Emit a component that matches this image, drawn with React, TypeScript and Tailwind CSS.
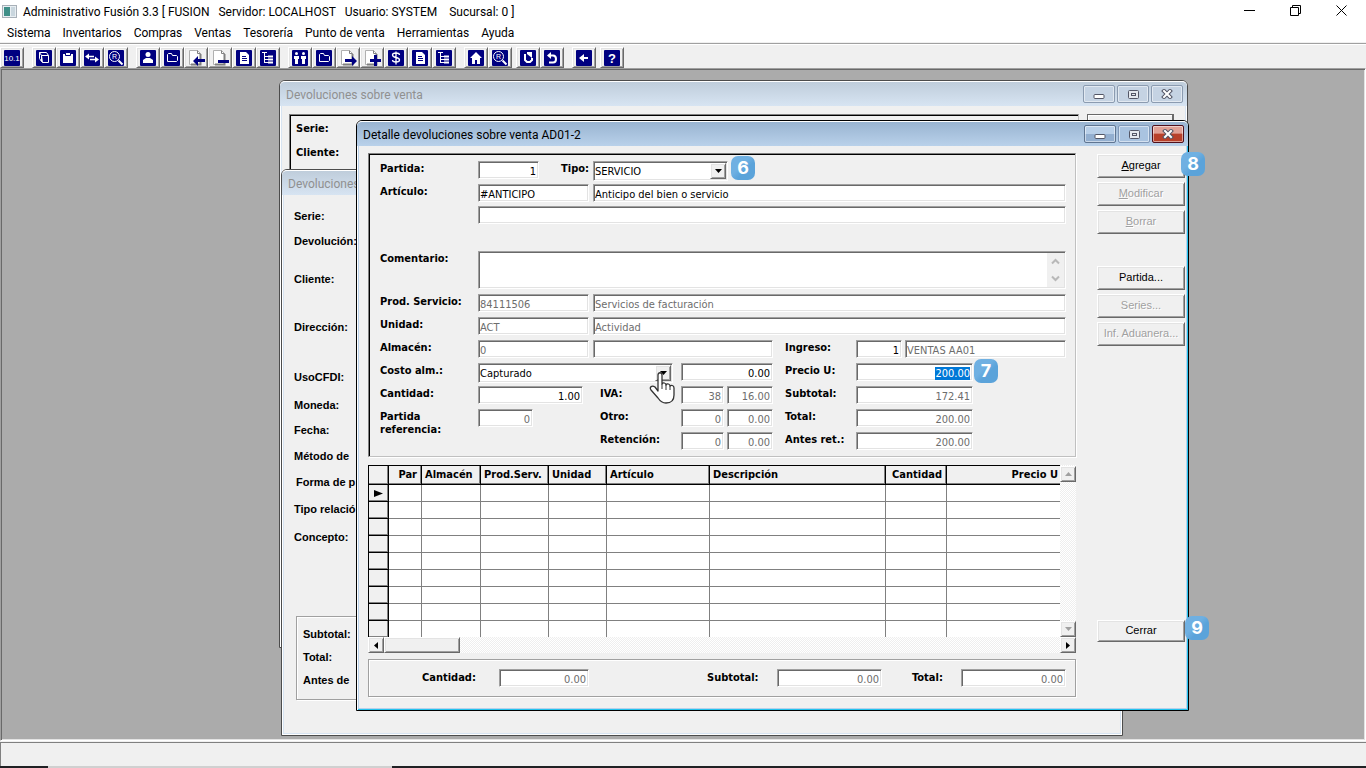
import { useEffect, useRef } from 'react'
import type { ReactNode } from 'react'

const MENUS = ['Sistema', 'Inventarios', 'Compras', 'Ventas', 'Tesorería', 'Punto de venta', 'Herramientas', 'Ayuda']

const COLUMNS = [
  { title: 'Par', width: 33, right: true },
  { title: 'Almacén', width: 59 },
  { title: 'Prod.Serv.', width: 68 },
  { title: 'Unidad', width: 58 },
  { title: 'Artículo', width: 103 },
  { title: 'Descripción', width: 176 },
  { title: 'Cantidad', width: 61, right: true },
  { title: 'Precio U', width: 113, right: true },
]

const SUNKEN = 'border border-t-[#a0a0a0] border-l-[#a0a0a0] border-r-white border-b-white shadow-[inset_1px_1px_0_#696969,inset_-1px_-1px_0_#e3e3e3]'
const RAISED = 'border border-t-white border-l-white border-r-[#696969] border-b-[#696969] bg-[#f0f0f0] shadow-[inset_1px_1px_0_#e3e3e3,inset_-1px_-1px_0_#a0a0a0]'

/* ---------- Toolbar icons ---------- */

// Navy tile with a white glyph inside
function Tile({ children }: { children: ReactNode }) {
  return (
    <svg width="18" height="18" viewBox="0 0 18 18" fill="none" stroke="white" aria-hidden="true">
      <rect x="1" y="1" width="16" height="16" rx="1" fill="#000080" stroke="none" />
      {children}
    </svg>
  )
}

// White page with a navy sign over its corner
function Page({ children }: { children: ReactNode }) {
  return (
    <svg width="18" height="18" viewBox="0 0 18 18" fill="#000080" aria-hidden="true">
      <path d="M2.500 1.500h8l3 3v11h-11z" fill="white" stroke="#b0b0b0" />
      <path d="M10.500 1.500v3h3" fill="none" stroke="#808080" />
      <path d="M13.500 5v10.500H4" fill="none" stroke="#808080" strokeWidth="2" />
      {children}
    </svg>
  )
}

const ICONS: Record<string, ReactNode> = {
  calc: (
    <Tile>
      <text x="9" y="12" fontSize="8" textAnchor="middle" fill="white" stroke="none" fontFamily="Liberation Sans, sans-serif">10.1</text>
    </Tile>
  ),
  box: <Tile><path d="M6.500 6.500h7v7h-6zM6.500 6.500v6l1 1M6.500 6.500l-2-3h7l2 3M4.500 3.500v6l2 3" /></Tile>,
  clipboard: <Tile><path d="M4 5h10v9H4z" fill="white" stroke="none" /><path d="M6.500 3.500h5v3h-5z" fill="white" stroke="#000080" /></Tile>,
  swap: <Tile><path d="M5 7.500h6M7 10.500h6" strokeWidth="1.500" /><path d="M6 4.500v6l-4-3zM12 7.500v6l4-3z" fill="white" stroke="none" /></Tile>,
  search: (
    <Tile>
      <circle cx="7.500" cy="7.500" r="5" />
      <path d="M11.500 11.500l4 4" strokeWidth="2" />
      <text x="7.500" y="10" fontSize="7" textAnchor="middle" fill="white" stroke="none" fontFamily="Liberation Sans, sans-serif">R</text>
    </Tile>
  ),
  person: <Tile><circle cx="9" cy="5.500" r="2.500" fill="white" stroke="none" /><path d="M4 14v-3l3-2h4l3 2v3z" fill="white" stroke="none" /></Tile>,
  folder: <Tile><path d="M4.500 12.500v-7l1-1h3l1 2h4l1 1v4l-1 1z" /></Tile>,
  pageLeft: <Page><path d="M6 12l5-5v3h7v3h-7v4z" /></Page>,
  pageMinus: <Page><path d="M7 11h11v3H7z" /></Page>,
  list: <Tile><path d="M5 3h6l3 3v9H5z" fill="white" stroke="none" /><path d="M7 7.500h4M7 9.500h5M7 11.500h5" stroke="#000080" /></Tile>,
  tree: <Tile><path d="M3 3.500h5M5.500 4v10M6 7.500h3M6 10.500h3M6 13.500h3" /><path d="M9 7.500h5M9 10.500h5M9 13.500h5" strokeWidth="2" /></Tile>,
  people: (
    <Tile>
      <g fill="white" stroke="none">
        <circle cx="5.500" cy="4.500" r="1.500" />
        <circle cx="12.500" cy="4.500" r="1.500" />
        <path d="M3 7h5v3H7v5H4v-5H3zM10 7h5v3h-1v5h-3v-5h-1z" />
      </g>
    </Tile>
  ),
  pageRight: <Page><path d="M18 12l-5-5v3H6v3h7v4z" /></Page>,
  pagePlus: <Page><path d="M11 6h3v4h4v3h-4v4h-3v-4H7v-3h4z" /></Page>,
  dollar: <Tile><path d="M12.500 6c0-1.500-1-2-3.500-2s-3.500.5-3.500 2 1 2 3.500 2.500 3.500 1 3.500 2.500-1 2-3.500 2-3.500-.5-3.500-2M9 2.500v13" strokeWidth="1.300" /></Tile>,
  home: <Tile><path d="M9 3l6 6h-2v6h-3v-4H8v4H5V9H3z" fill="white" stroke="none" /></Tile>,
  rotate: <Tile><path d="M6 5v6l2 2h3l2-2V9" strokeWidth="2" /><path d="M8 3h5v6L8 5z" fill="white" stroke="none" /></Tile>,
  undo: <Tile><path d="M6 6.500h4c4 0 4 7 0 7H6" strokeWidth="2" /><path d="M8 3v7L4 6.500z" fill="white" stroke="none" /></Tile>,
  back: <Tile><path d="M7 9h6" strokeWidth="2" /><path d="M9 5v8L4 9z" fill="white" stroke="none" /></Tile>,
  help: (
    <Tile>
      <text x="9" y="14" fontSize="13" textAnchor="middle" fill="white" stroke="none" fontFamily="Liberation Sans, sans-serif" fontWeight="bold">?</text>
    </Tile>
  ),
}

const TOOL_GROUPS = [
  { gap: 'mr-2', tools: ['calc'] },
  { gap: 'mr-2', tools: ['box', 'clipboard', 'swap', 'search'] },
  { gap: 'mr-2', tools: ['person', 'folder', 'pageLeft', 'pageMinus', 'list', 'tree'] },
  { gap: 'mr-2', tools: ['people', 'folder', 'pageRight', 'pagePlus', 'dollar', 'list', 'tree'] },
  { gap: 'mr-1', tools: ['home', 'search'] },
  { gap: 'mr-2', tools: ['rotate', 'undo'] },
  { gap: 'mr-1', tools: ['back'] },
  { gap: 'mr-1', tools: ['help'] },
]

/* ---------- Small controls ---------- */

function Label({ htmlFor, className = '', children }: { htmlFor?: string; className?: string; children: ReactNode }) {
  return <label htmlFor={htmlFor} className={`shrink-0 font-bold leading-[13px] whitespace-nowrap ${className}`}>{children}</label>
}

type FieldProps = { id: string; value?: string; className?: string; right?: boolean; disabled?: boolean; label?: string }

function Field({ id, value = '', className = '', right, disabled, label }: FieldProps) {
  return (
    <input
      id={id}
      aria-label={label}
      defaultValue={value}
      disabled={disabled}
      className={`h-[18px] min-w-0 bg-white pl-px pr-[2px] pt-[2px] outline-none disabled:text-[#6d6d6d] ${right ? 'text-right' : ''} ${SUNKEN} ${className}`}
    />
  )
}

function Combo({ id, value, className = '', children }: { id: string; value: string; className?: string; children?: ReactNode }) {
  return (
    <div className={`relative shrink-0 ${className}`}>
      <select id={id} defaultValue={value} className={`h-5 w-full appearance-none bg-white px-px pt-[2px] outline-none ${SUNKEN}`}>
        <option>{value}</option>
      </select>
      <span className={`pointer-events-none absolute right-[2px] top-[2px] flex h-4 w-4 items-center justify-center ${RAISED}`}>
        <svg width="7" height="4" viewBox="0 0 7 4"><path d="M0 0h7L3.500 4z" /></svg>
      </span>
      {children}
    </div>
  )
}

function PushButton({ disabled, className = 'h-6', children }: { disabled?: boolean; className?: string; children: ReactNode }) {
  return (
    <button
      disabled={disabled}
      className={`w-full shrink-0 pb-px text-[11px] disabled:text-[#a0a0a0] disabled:[text-shadow:1px_1px_0_white] font-['Liberation_Sans',sans-serif] ${RAISED} ${className}`}
    >
      {children}
    </button>
  )
}

function Badge({ n, className }: { n: number; className: string }) {
  return (
    <span className={`absolute z-10 flex h-6 w-6 items-center justify-center rounded-[7px] bg-linear-to-br from-[#6fb0e2] from-40% to-[#5ba3da] to-60% font-['Inter',sans-serif] text-lg font-bold text-white ${className}`}>
      {n}
    </span>
  )
}

function Hand() {
  return (
    <svg className="pointer-events-none absolute -right-[2px] top-2 z-10" width="26" height="33" viewBox="0 0 26 33" aria-hidden="true">
      <path
        d="M9 20V4c0-3 4-3 4 0v9c1-2 4-1 4 1 1-2 4-1 4 1 1-1 4-1 4 2v7c0 5-3 8-8 8-4 0-6-2-8-5l-7-8c-2-3 1-5 4-3z"
        fill="white" stroke="#333" strokeWidth="1.300" strokeLinejoin="round"
      />
      <path d="M13 13v5M17 14v5M21 15v4" stroke="#333" />
    </svg>
  )
}

/* ---------- Child windows ---------- */

const CAPTION = 'flex h-[18px] w-8 items-center justify-center rounded-[2px] border shadow-[inset_0_0_0_1px_#ffffff80]'

function CaptionButtons({ active }: { active?: boolean }) {
  const tone = active ? 'border-[#5f7591] bg-linear-to-b from-[#b8cfe8] from-50% to-[#93afd0] to-50%' : 'border-[#8b9bb0] bg-[#c5d3e3]'
  return (
    <div className="flex gap-[2px]">
      <button aria-label="Minimizar" className={`${CAPTION} ${tone}`}>
        <svg width="12" height="12" viewBox="0 0 12 12"><rect x="1" y="6.500" width="10" height="4" rx="1" fill="white" stroke="#535666" /></svg>
      </button>
      <button aria-label="Maximizar" className={`${CAPTION} ${active ? 'border-[#8098b8] bg-[#a9c3e0]' : tone}`}>
        <svg width="11" height="9" viewBox="0 0 11 9" fill="#e4e8ee" stroke="#535666">
          <rect x=".5" y=".5" width="10" height="8" rx="1" />
          <rect x="3.500" y="3.500" width="4" height="2" />
        </svg>
      </button>
      <button aria-label="Cerrar ventana" className={`${CAPTION} ${active ? 'border-[#50101c] bg-linear-to-b from-[#e0a095] from-45% to-[#b8402a] to-50%' : tone}`}>
        <svg width="12" height="10" viewBox="0 0 12 10" strokeLinecap="square">
          <path d="M3 2l6 6M9 2L3 8" stroke="#535666" strokeWidth="4" />
          <path d="M3 2l6 6M9 2L3 8" stroke="white" strokeWidth="2" />
        </svg>
      </button>
    </div>
  )
}

function ChildWindow({ title, active, className, children }: { title: string; active?: boolean; className: string; children: ReactNode }) {
  const frame = active
    ? 'border-black shadow-[inset_1px_0_0_white,inset_-1px_-1px_0_#22c3ee,inset_2px_0_0_#b9d1ea,inset_-2px_-2px_0_#b9d1ea]'
    : 'border-[#4c4c4c] shadow-[inset_1px_0_0_white,inset_-1px_-1px_0_white,inset_2px_0_0_#d7e4f2,inset_-2px_-2px_0_#d7e4f2]'
  const bar = active ? 'from-[#99b4d1] to-[#b9d1ea] text-black' : 'from-[#bfcddb] to-[#d7e4f2] text-[#909090]'
  return (
    <section className={`absolute flex flex-col rounded-t-[6px] border bg-[#f0f0f0] ${frame} ${className}`}>
      <header className={`flex h-[25px] shrink-0 items-center justify-between rounded-t-[5px] border-t border-white bg-linear-to-b pl-[6px] pr-1 font-['Roboto',sans-serif] text-[12px] ${bar}`}>
        <h2 className="overflow-hidden whitespace-nowrap pt-[2px]">{title}</h2>
        <CaptionButtons active={active} />
      </header>
      {children}
    </section>
  )
}

const CFDI_LABELS = [
  { text: 'Serie:', row: 'h-[25px]' },
  { text: 'Devolución:', row: 'h-[38px]' },
  { text: 'Cliente:', row: 'h-12' },
  { text: 'Dirección:', row: 'h-[50px]' },
  { text: 'UsoCFDI:', row: 'h-7' },
  { text: 'Moneda:', row: 'h-[25px]' },
  { text: 'Fecha:', row: 'h-[26px]' },
  { text: 'Método de', row: 'h-[26px]' },
  { text: 'Forma de p', row: 'h-[27px] pl-[2px]' },
  { text: 'Tipo relació', row: 'h-7' },
  { text: 'Concepto:', row: 'h-7' },
]

function ReturnsWindow() {
  return (
    <ChildWindow title="Devoluciones sobre venta" className="left-[278px] top-[11px] h-[568px] w-[909px]">
      <div className="flex flex-1 gap-2 pl-[9px] pr-[13px] pt-2">
        <div className="flex flex-1 flex-col gap-[11px] border border-t-[#808080] border-l-[#808080] border-r-[#c0c0c0] border-b-[#c0c0c0] pl-[6px] pt-[7px] shadow-[inset_1px_1px_0_black]">
          <Label>Serie:</Label>
          <Label>Cliente:</Label>
        </div>
        <button aria-label="Aceptar" className="h-6 w-[87px] border border-r-2 border-[#696969] bg-[#f0f0f0] shadow-[inset_1px_1px_0_white]" />
      </div>
    </ChildWindow>
  )
}

function CfdiWindow() {
  return (
    <ChildWindow title="Devoluciones" className="left-[280px] top-[100px] h-[567px] w-[842px]">
      <div className="flex flex-1 flex-col pl-3 pt-[14px] pr-3 font-['Liberation_Sans',sans-serif] text-[11px] font-bold leading-[14px]">
        {CFDI_LABELS.map((l) => (
          <div key={l.text} className={l.row}>{l.text}</div>
        ))}
        <div className="ml-[2px] mt-auto mb-[35px] flex h-[84px] flex-col gap-[9px] border border-[#a0a0a0] pl-[6px] pt-[10px] shadow-[inset_1px_1px_0_white,1px_1px_0_white]">
          <div>Subtotal:</div>
          <div>Total:</div>
          <div>Antes de</div>
        </div>
      </div>
    </ChildWindow>
  )
}

function DetailForm() {
  const price = useRef<HTMLInputElement>(null)

  useEffect(() => {
    price.current?.focus()
    price.current?.select()
  }, [])

  return (
    <form className="border border-t-[#808080] border-l-[#808080] border-r-[#c0c0c0] border-b-[#c0c0c0] pl-[11px] pr-[9px] pb-[6px] pt-[7px] shadow-[inset_1px_1px_0_black,1px_1px_0_white]">
      <div className="flex h-[23px] items-start">
        <Label htmlFor="partida" className="w-[98px] pt-px">Partida:</Label>
        <Field id="partida" value="1" right className="w-[61px]" />
        <Label htmlFor="tipo" className="ml-[22px] w-8 pt-px">Tipo:</Label>
        <Combo id="tipo" value="SERVICIO" className="w-[135px]">
          <Badge n={6} className="left-full -top-[5px] ml-[3px]" />
        </Combo>
      </div>
      <div className="flex h-[22px] items-start">
        <Label htmlFor="articulo" className="w-[98px] pt-px">Artículo:</Label>
        <Field id="articulo" value="#ANTICIPO" className="w-[111px]" />
        <Field id="articulo-nombre" label="Nombre del artículo" value="Anticipo del bien o servicio" className="ml-1 flex-1" />
      </div>
      <div className="flex h-[45px] items-start pl-[98px]">
        <Field id="articulo-extra" label="Descripción adicional" className="flex-1" />
      </div>
      <div className="flex h-[43px] items-start">
        <Label htmlFor="comentario" className="w-[98px] pt-px">Comentario:</Label>
        <div className={`flex h-[38px] flex-1 bg-white p-px ${SUNKEN}`}>
          <textarea id="comentario" className="h-full flex-1 resize-none outline-none" />
          <div className="flex w-[17px] flex-col items-center justify-between bg-[#f0f0f0] py-[5px]">
            <svg width="9" height="7" viewBox="0 0 9 7" fill="none" stroke="#b8b8b8" strokeWidth="2"><path d="M1 5.500L4.500 2 8 5.500" /></svg>
            <svg width="9" height="7" viewBox="0 0 9 7" fill="none" stroke="#b8b8b8" strokeWidth="2"><path d="M1 1.500L4.500 5 8 1.500" /></svg>
          </div>
        </div>
      </div>
      <div className="flex h-[23px] items-start">
        <Label htmlFor="prodserv" className="w-[98px] pt-px">Prod. Servicio:</Label>
        <Field id="prodserv" value="84111506" disabled className="w-[111px]" />
        <Field id="prodserv-nombre" label="Nombre del servicio" value="Servicios de facturación" disabled className="ml-1 flex-1" />
      </div>
      <div className="flex h-[23px] items-start">
        <Label htmlFor="unidad" className="w-[98px] pt-px">Unidad:</Label>
        <Field id="unidad" value="ACT" disabled className="w-[111px]" />
        <Field id="unidad-nombre" label="Nombre de la unidad" value="Actividad" disabled className="ml-1 flex-1" />
      </div>
      <div className="flex h-[23px] items-start">
        <Label htmlFor="almacen" className="w-[98px] pt-px">Almacén:</Label>
        <Field id="almacen" value="0" disabled className="w-[111px]" />
        <Field id="almacen-nombre" label="Nombre del almacén" disabled className="ml-1 w-[180px]" />
        <Label htmlFor="ingreso" className="ml-3 w-[71px] pt-px">Ingreso:</Label>
        <Field id="ingreso" value="1" right className="w-[46px]" />
        <Field id="ingreso-nombre" label="Nombre del ingreso" value="VENTAS AA01" disabled className="ml-[3px] flex-1" />
      </div>
      <div className="flex h-[23px] items-start">
        <Label htmlFor="costo" className="w-[98px] pt-px">Costo alm.:</Label>
        <Combo id="costo" value="Capturado" className="w-[195px]"><Hand /></Combo>
        <Field id="costo-importe" label="Importe del costo" value="0.00" right className="ml-2 w-[92px]" />
        <Label htmlFor="precio" className="ml-3 w-[71px] pt-px">Precio U:</Label>
        <div className="relative">
          <input
            id="precio"
            ref={price}
            defaultValue="200.00"
            className={`h-[18px] w-[117px] bg-white pl-px pr-[2px] pt-[2px] text-right outline-none selection:bg-[#0078d7] selection:text-white ${SUNKEN}`}
          />
          <Badge n={7} className="left-full -top-1 ml-px" />
        </div>
      </div>
      <div className="flex h-[23px] items-start">
        <Label htmlFor="cantidad" className="w-[98px] pt-px">Cantidad:</Label>
        <Field id="cantidad" value="1.00" right className="w-[105px]" />
        <Label htmlFor="iva" className="ml-[17px] w-[81px] pt-px">IVA:</Label>
        <Field id="iva" value="38" right disabled className="w-[43px]" />
        <Field id="iva-tasa" label="Tasa de IVA" value="16.00" right disabled className="ml-[3px] w-[46px]" />
        <Label htmlFor="subtotal" className="ml-3 w-[71px] pt-px">Subtotal:</Label>
        <Field id="subtotal" value="172.41" right disabled className="w-[117px]" />
      </div>
      <div className="flex h-[23px] items-start">
        <Label htmlFor="referencia" className="w-[98px] pt-px">Partida<br />referencia:</Label>
        <Field id="referencia" value="0" right disabled className="w-[55px]" />
        <Label htmlFor="otro" className="ml-[67px] w-[81px] pt-px">Otro:</Label>
        <Field id="otro" value="0" right disabled className="w-[43px]" />
        <Field id="otro-tasa" label="Tasa de otro" value="0.00" right disabled className="ml-[3px] w-[46px]" />
        <Label htmlFor="total" className="ml-3 w-[71px] pt-px">Total:</Label>
        <Field id="total" value="200.00" right disabled className="w-[117px]" />
      </div>
      <div className="flex items-start pl-[220px]">
        <Label htmlFor="retencion" className="w-[81px] pt-px">Retención:</Label>
        <Field id="retencion" value="0" right disabled className="w-[43px]" />
        <Field id="retencion-tasa" label="Tasa de retención" value="0.00" right disabled className="ml-[3px] w-[46px]" />
        <Label htmlFor="antes" className="ml-3 w-[71px] pt-px">Antes ret.:</Label>
        <Field id="antes" value="200.00" right disabled className="w-[117px]" />
      </div>
    </form>
  )
}

const TRACK = 'bg-[repeating-conic-gradient(#ffffff_0_25%,#eeeeee_0_50%)] bg-[length:2px_2px]'

function ItemsGrid() {
  return (
    <div className="mt-2">
      <div className="flex">
        <div className="min-w-0 flex-1 overflow-hidden border-l border-t border-black">
          <table className="w-full table-fixed border-separate border-spacing-0 bg-white">
            <colgroup>
              <col className="w-5" />
              {COLUMNS.map((c) => <col key={c.title} style={{ width: c.width }} />)}
            </colgroup>
            <thead>
              <tr className="h-[19px]">
                <td className="border-b border-r border-black bg-[#f0f0f0] p-0 shadow-[inset_-1px_-1px_0_#808080]" />
                {COLUMNS.map((c) => (
                  <th key={c.title} className={`whitespace-nowrap border-b border-r border-black bg-[#f0f0f0] py-0 pl-[3px] pr-1 leading-4 shadow-[inset_-1px_-1px_0_#808080] last:border-r-0 last:pr-[2px] last:shadow-[inset_0_-1px_0_#808080] ${c.right ? 'text-right' : 'text-left'}`}>
                    {c.title}
                  </th>
                ))}
              </tr>
            </thead>
            <tbody>
              {[0, 1, 2, 3, 4, 5, 6, 7, 8].map((r) => (
                <tr key={r} className="group h-[17px] last:h-4">
                  <td className="border-b border-r border-black bg-[#f0f0f0] p-0 shadow-[inset_-1px_-1px_0_#808080] group-last:border-b-0">
                    {r === 0 && <svg className="ml-[5px] block" width="9" height="7" viewBox="0 0 9 7"><path d="M0 0l9 3.500L0 7z" /></svg>}
                  </td>
                  {COLUMNS.map((c) => (
                    <td key={c.title} className="border-b border-r border-[#808080] p-0 last:border-r-0 group-last:border-b-0" />
                  ))}
                </tr>
              ))}
            </tbody>
          </table>
        </div>
        <div className={`flex w-4 flex-col justify-between pt-px ${TRACK}`}>
          <button aria-label="Arriba" className={`flex h-4 w-4 items-center justify-center ${RAISED}`}>
            <svg width="7" height="4" viewBox="0 0 7 4"><path d="M0 4h7L3.500 0z" fill="#a0a0a0" /></svg>
          </button>
          <button aria-label="Abajo" className={`flex h-4 w-4 items-center justify-center ${RAISED}`}>
            <svg width="7" height="4" viewBox="0 0 7 4"><path d="M0 0h7L3.500 4z" fill="#a0a0a0" /></svg>
          </button>
        </div>
      </div>
      <div className={`flex h-4 ${TRACK}`}>
        <button aria-label="Izquierda" className={`flex w-4 items-center justify-center ${RAISED}`}>
          <svg width="4" height="7" viewBox="0 0 4 7"><path d="M4 0v7L0 3.500z" /></svg>
        </button>
        <div className={`w-[76px] ${RAISED}`} />
        <button aria-label="Derecha" className={`ml-auto flex w-4 items-center justify-center ${RAISED}`}>
          <svg width="4" height="7" viewBox="0 0 4 7"><path d="M0 0v7l4-3.500z" /></svg>
        </button>
      </div>
    </div>
  )
}

function DetailWindow() {
  return (
    <ChildWindow active title="Detalle devoluciones sobre venta AD01-2" className="left-[355px] top-[51px] h-[591px] w-[833px]">
      <div className="flex flex-1 gap-[21px] pl-[11px] pr-[3px] pt-[7px]">
        <div className="min-w-0 flex-1">
          <DetailForm />
          <ItemsGrid />
          <div className="mt-[6px] flex h-[38px] items-center border border-[#a0a0a0] pl-[53px] pr-[9px] shadow-[inset_1px_1px_0_white,1px_1px_0_white]">
            <Label htmlFor="suma-cantidad" className="w-[77px] pb-[2px]">Cantidad:</Label>
            <Field id="suma-cantidad" value="0.00" right disabled className="w-[90px]" />
            <Label htmlFor="suma-subtotal" className="ml-auto w-[70px] pb-[2px]">Subtotal:</Label>
            <Field id="suma-subtotal" value="0.00" right disabled className="w-[105px]" />
            <Label htmlFor="suma-total" className="ml-[30px] w-[49px] pb-[2px]">Total:</Label>
            <Field id="suma-total" value="0.00" right disabled className="w-[105px]" />
          </div>
        </div>
        <div className="flex w-[88px] flex-col pb-[68px] pt-px">
          <div className="relative flex flex-col gap-1">
            <PushButton><u>A</u>gregar</PushButton>
            <PushButton disabled><u>M</u>odificar</PushButton>
            <PushButton disabled><u>B</u>orrar</PushButton>
            <Badge n={8} className="-right-5 -top-[2px]" />
          </div>
          <div className="mt-8 flex flex-col gap-1">
            <PushButton>Partida...</PushButton>
            <PushButton disabled>Series...</PushButton>
            <PushButton disabled>Inf. Aduanera...</PushButton>
          </div>
          <div className="relative mt-auto">
            <PushButton className="h-[22px]">Cerrar</PushButton>
            <Badge n={9} className="-right-6 -top-1" />
          </div>
        </div>
      </div>
    </ChildWindow>
  )
}

export default function App() {
  return (
    <div className="flex h-screen flex-col overflow-hidden bg-[#f0f0f0] font-['DejaVu_Sans_Condensed','DejaVu_Sans',sans-serif] text-[11px] text-black">
      {/* Title bar */}
      <div className="flex h-[23px] shrink-0 items-center bg-white pl-[2px] pr-[2px] font-['Roboto',sans-serif] text-[12px]">
        <svg width="15" height="13" viewBox="0 0 15 13" aria-hidden="true">
          <rect x=".5" y=".5" width="14" height="12" fill="#e8eef2" stroke="#a8b0b8" />
          <rect x="2" y="2" width="6" height="9" fill="#3f8f88" />
          <rect x="9" y="2" width="4" height="9" fill="#c9d6de" />
        </svg>
        <h1 className="ml-[6px] whitespace-pre">{'Administrativo Fusión 3.3 [ FUSION   Servidor: LOCALHOST   Usuario: SYSTEM    Sucursal: 0 ]'}</h1>
        <div className="ml-auto flex h-[21px] items-center self-start">
          <button aria-label="Minimizar" className="flex w-[46px] justify-center"><svg width="11" height="11" viewBox="0 0 11 11" stroke="black"><path d="M0 5.500h11" /></svg></button>
          <button aria-label="Restaurar" className="flex w-[46px] justify-center">
            <svg width="11" height="11" viewBox="0 0 11 11" fill="none" stroke="black"><path d="M.5 2.500h8v8h-8zM2.500 2.500v-2h8v8h-2" /></svg>
          </button>
          <button aria-label="Cerrar" className="flex w-[46px] justify-center"><svg width="11" height="11" viewBox="0 0 11 11" stroke="black"><path d="M.5.500l10 10M10.500.500l-10 10" /></svg></button>
        </div>
      </div>

      {/* Menu */}
      <nav className="flex h-[19px] shrink-0 items-center gap-3 bg-white pl-[7px] font-['Roboto',sans-serif] text-[12px]">
        {MENUS.map((m) => <button key={m}>{m}</button>)}
      </nav>

      {/* Toolbar */}
      <div className="mt-px flex h-[25px] shrink-0 border-t border-[#a0a0a0] pt-[3px] shadow-[inset_0_1px_0_white]">
        {TOOL_GROUPS.map((g, i) => (
          <div key={i} className={`flex ${g.gap}`}>
            {g.tools.map((t) => (
              <button key={t} aria-label={t} className={`flex h-[21px] w-6 items-center justify-center ${RAISED}`}>{ICONS[t]}</button>
            ))}
          </div>
        ))}
      </div>

      {/* Workspace */}
      <main className="relative min-h-0 flex-1 overflow-hidden border border-t-[#a0a0a0] border-l-[#a0a0a0] border-r-white border-b-white bg-[#ababab] shadow-[inset_1px_1px_0_#696969,inset_-1px_-1px_0_#e3e3e3]">
        <ReturnsWindow />
        <CfdiWindow />
        <DetailWindow />
      </main>

      {/* Status bar */}
      <footer className="mt-px h-6 shrink-0 border-l border-t border-[#808080]" />
      <div className="flex h-[2px] shrink-0 bg-[#202124]">
        <div className="ml-12 w-[344px] bg-[#d0d0d0]" />
      </div>
    </div>
  )
}
